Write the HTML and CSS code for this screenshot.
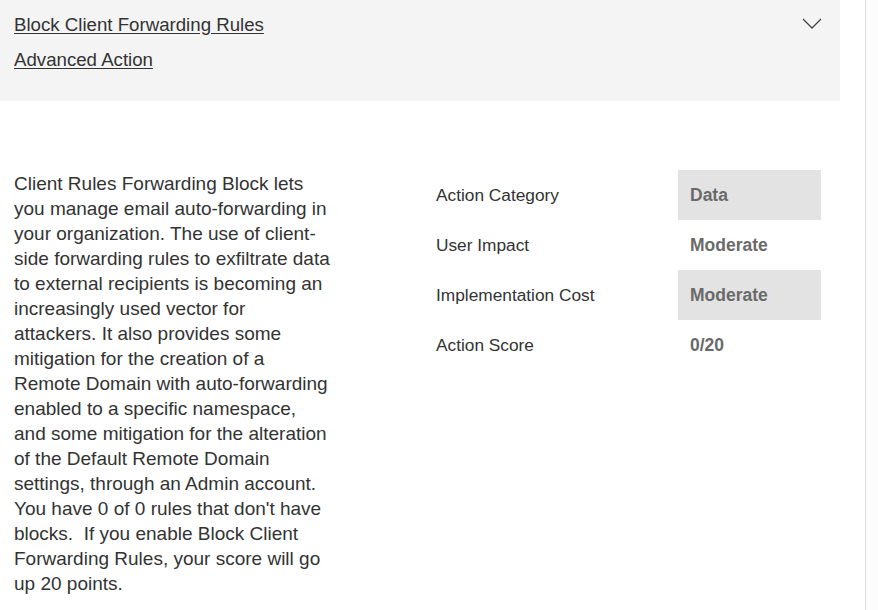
FILE: index.html
```html
<!DOCTYPE html>
<html>
<head>
<meta charset="utf-8">
<link rel="stylesheet" href="styles.css">
</head>
<body>
<div class="page">
  <div class="main">
    <div class="header">
      <div class="titles">
        <a class="link" href="#">Block Client Forwarding Rules</a>
        <a class="link" href="#">Advanced Action</a>
      </div>
      <svg class="chevron" width="20" height="12" viewBox="0 0 20 12"><polyline points="1,1 10,10 19,1" fill="none" stroke="#444" stroke-width="1.3"/></svg>
    </div>
    <div class="content">
      <p class="desc">Client Rules Forwarding Block lets you manage email auto-forwarding in your organization. The use of client-side forwarding rules to exfiltrate data to external recipients is becoming an increasingly used vector for attackers. It also provides some mitigation for the creation of a Remote Domain with auto-forwarding enabled to a specific namespace, and some mitigation for the alteration of the Default Remote Domain settings, through an Admin account. You have 0 of 0 rules that don't have blocks.&nbsp; If you enable Block Client Forwarding Rules, your score will go up 20 points.</p>
      <div class="facts">
        <div class="label">Action Category</div><div class="value shade">Data</div>
        <div class="label">User Impact</div><div class="value">Moderate</div>
        <div class="label">Implementation Cost</div><div class="value shade">Moderate</div>
        <div class="label">Action Score</div><div class="value">0/20</div>
      </div>
    </div>
  </div>
  <div class="rail"></div>
</div>
</body>
</html>
```

FILE: styles.css
```css
html, body {
  margin: 0;
  padding: 0;
  background: #fff;
}
body {
  font-family: "Liberation Sans", Arial, sans-serif;
  color: #333;
}
.page {
  display: flex;
  width: 878px;
  height: 610px;
  overflow: hidden;
}
.main {
  width: 840px;
  flex: none;
}
.rail {
  margin-left: 25px;
  width: 13px;
  border-left: 1px solid #dcdcdc;
  background: #fcfcfc;
}
.header {
  background: #f4f4f4;
  height: 101px;
  box-sizing: border-box;
  padding: 7px 18px 0 14px;
  display: flex;
  justify-content: space-between;
  align-items: flex-start;
}
.titles {
  display: flex;
  flex-direction: column;
}
.link {
  display: block;
  font-size: 18.67px;
  line-height: 35px;
  color: #333;
  text-decoration: underline;
  text-underline-offset: 2px;
}
.chevron {
  margin-top: 11px;
}
.content {
  display: flex;
  padding-top: 70px;
}
.desc {
  margin: 0 0 0 14px;
  width: 317px;
  flex: none;
  font-size: 19px;
  line-height: 25px;
  color: #333;
}
.facts {
  margin-left: 105px;
  display: grid;
  grid-template-columns: 242px 143px;
  grid-auto-rows: 50px;
  align-self: flex-start;
  margin-top: -1px;
}
.label, .value {
  display: flex;
  align-items: center;
}
.label {
  font-size: 17.3px;
  color: #333;
}
.value {
  padding-left: 12px;
  font-size: 17.5px;
  font-weight: bold;
  color: #6a6a6a;
}
.shade {
  background: #e3e3e3;
}
```
